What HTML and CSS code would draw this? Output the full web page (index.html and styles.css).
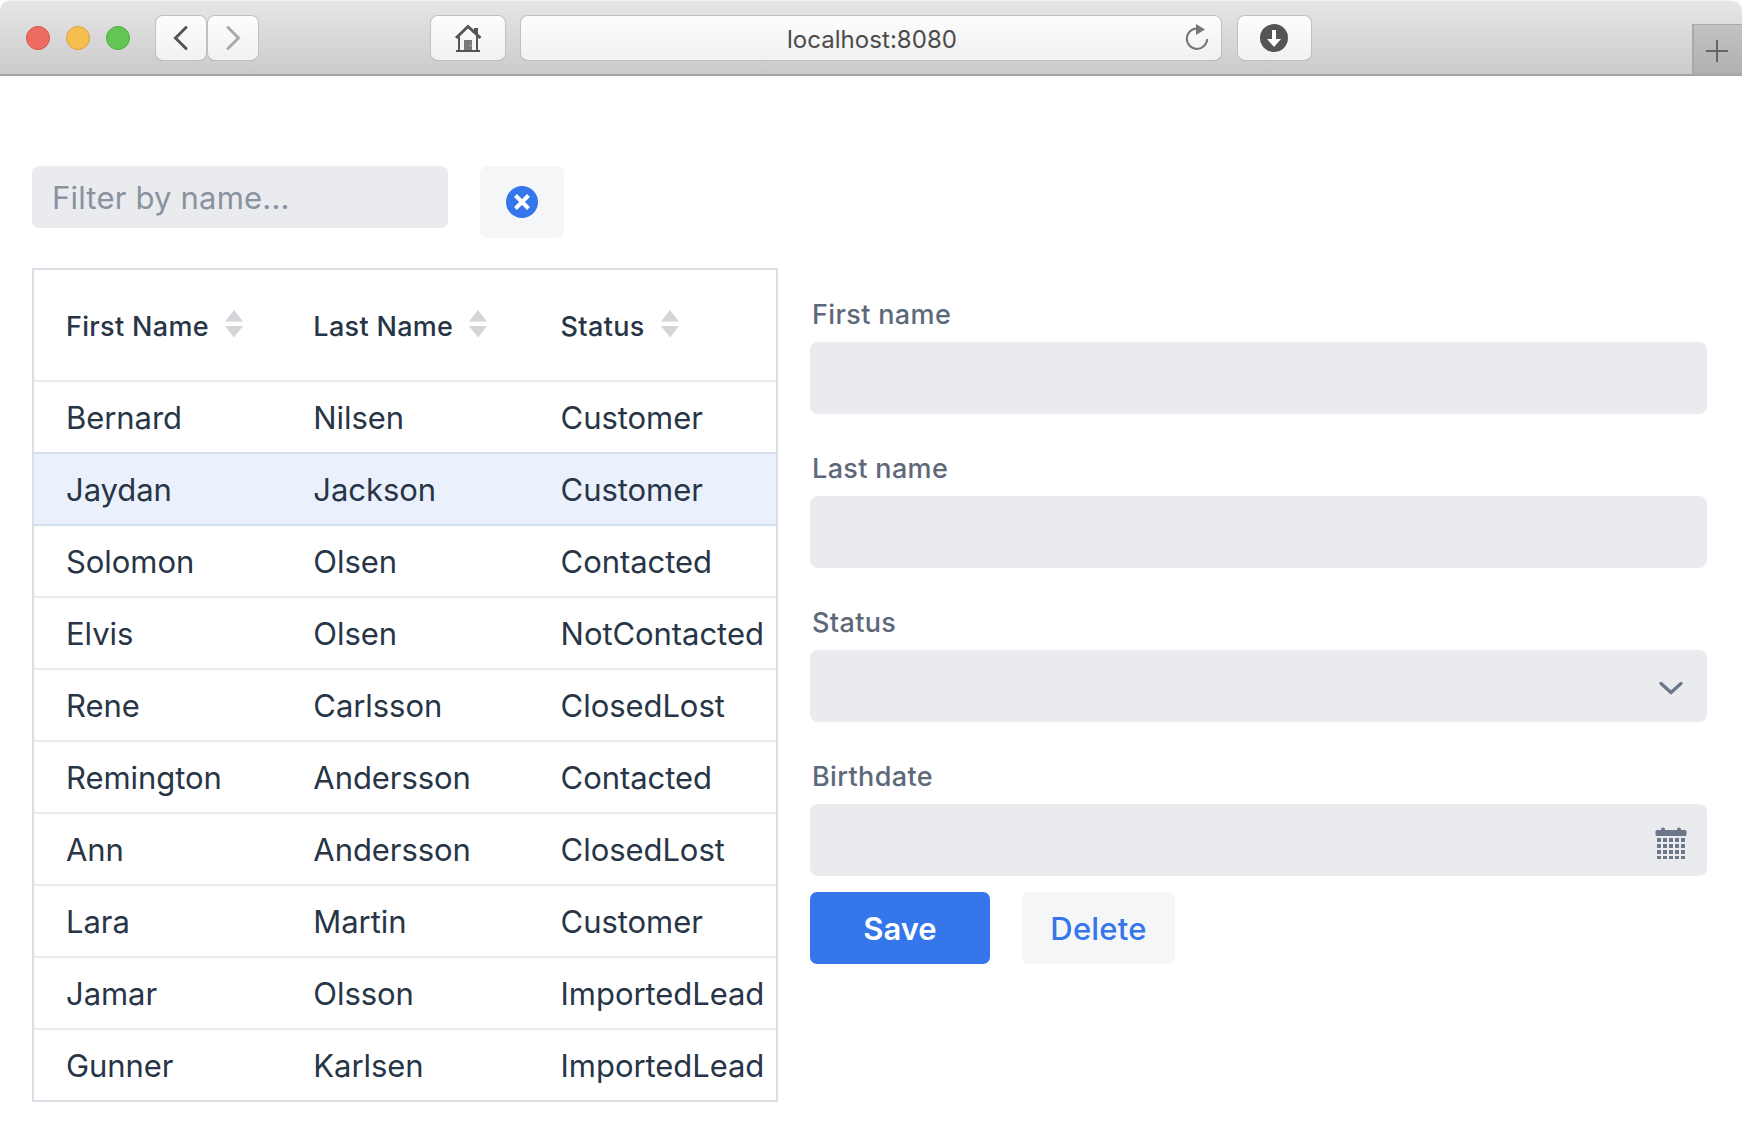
FILE: index.html
```html
<!DOCTYPE html>
<html lang="en">
<head>
<meta charset="utf-8">
<title>localhost:8080</title>
<link rel="stylesheet" href="styles.css">
</head>
<body>
<header class="toolbar">
  <div class="lights"><span class="light red"></span><span class="light yellow"></span><span class="light green"></span></div>
  <div class="nav">
    <div class="chrome-btn"><svg width="50" height="46" viewBox="0 0 50 46"><path d="M30 12.500L19.500 23L30 33.500" fill="none" stroke="#555" stroke-width="3" stroke-linecap="round"/></svg></div>
    <div class="chrome-btn"><svg width="50" height="46" viewBox="0 0 50 46"><path d="M20 12.500L30.500 23L20 33.500" fill="none" stroke="#aaa" stroke-width="3" stroke-linecap="round"/></svg></div>
  </div>
  <div class="chrome-btn home"><svg width="76" height="46" viewBox="0 0 76 46"><path d="M26 23L38 11.500L50.500 23" fill="none" stroke="#555" stroke-width="3"/><path d="M44 13h4v7l-4-4z" fill="#555"/><path d="M29 21V36M47 21V36" stroke="#555" stroke-width="2"/><path d="M26 36H50" stroke="#555" stroke-width="2"/><path d="M34 25h8v10h-8z" fill="#777"/><circle cx="40.500" cy="30.500" r=".6" fill="#fff"/></svg></div>
  <div class="chrome-btn address"><span class="url">localhost:8080</span>
    <svg class="reload" width="30" height="30" viewBox="0 0 30 30"><path d="M14 5.500A10.200 10.200 0 1 0 24.200 16" fill="none" stroke="#777" stroke-width="2"/><path d="M13 1V12L22 6.500z" fill="#777"/></svg></div>
  <div class="chrome-btn download"><svg width="75" height="46" viewBox="0 0 75 46"><circle cx="37" cy="23" r="14" fill="#555"/><path d="M35 15h4v9h5L37 32L30 24h5z" fill="#fff"/></svg></div>
  <div class="new-tab"><svg width="48" height="48" viewBox="0 0 48 48"><path d="M12 26H34M23 15V37" stroke="#666" stroke-width="2"/></svg></div>
</header>
<main class="page">
  <div class="filter-bar">
    <div class="filter">Filter by name...</div>
    <div class="clear"><svg width="32" height="32" viewBox="0 0 32 32"><circle cx="16" cy="16" r="16" fill="#3576eb"/><path d="M9.500 9.500L22.500 22.500M22.500 9.500L9.500 22.500" stroke="#fff" stroke-width="4"/></svg></div>
  </div>
  <div class="content">
    <div class="grid">
      <div class="row head">
        <span>First Name<svg class="sort" width="18" height="28" viewBox="0 0 18 28"><path d="M0 11.500L9 0L18 11.500zM0 16H18L9 27.500z" fill="#d3d5d9"/></svg></span>
        <span>Last Name<svg class="sort" width="18" height="28" viewBox="0 0 18 28"><path d="M0 11.500L9 0L18 11.500zM0 16H18L9 27.500z" fill="#d3d5d9"/></svg></span>
        <span>Status<svg class="sort" width="18" height="28" viewBox="0 0 18 28"><path d="M0 11.500L9 0L18 11.500zM0 16H18L9 27.500z" fill="#d3d5d9"/></svg></span>
      </div>
      <div class="row before-selected"><span>Bernard</span><span>Nilsen</span><span>Customer</span></div>
      <div class="row selected"><span>Jaydan</span><span>Jackson</span><span>Customer</span></div>
      <div class="row"><span>Solomon</span><span>Olsen</span><span>Contacted</span></div>
      <div class="row"><span>Elvis</span><span>Olsen</span><span>NotContacted</span></div>
      <div class="row"><span>Rene</span><span>Carlsson</span><span>ClosedLost</span></div>
      <div class="row"><span>Remington</span><span>Andersson</span><span>Contacted</span></div>
      <div class="row"><span>Ann</span><span>Andersson</span><span>ClosedLost</span></div>
      <div class="row"><span>Lara</span><span>Martin</span><span>Customer</span></div>
      <div class="row"><span>Jamar</span><span>Olsson</span><span>ImportedLead</span></div>
      <div class="row"><span>Gunner</span><span>Karlsen</span><span>ImportedLead</span></div>
    </div>
    <form class="form">
      <div class="label">First name</div><div class="field"></div>
      <div class="label">Last name</div><div class="field"></div>
      <div class="label">Status</div><div class="field"><svg width="36" height="36" viewBox="0 0 36 36"><path d="M8 15.500L18 24.500L28 15.500" fill="none" stroke="#6c7789" stroke-width="3.400" stroke-linecap="round" stroke-linejoin="round"/></svg></div>
      <div class="label">Birthdate</div><div class="field"><svg width="36" height="38" viewBox="0 0 36 38"><rect x="2.500" y="9" width="31" height="6" rx="1.500" fill="#6c7789"/><path d="M8 10V8.500a1.500 1.500 0 0 1 4 0V10zM24 10V8.500a1.500 1.500 0 0 1 4 0V10z" fill="#6c7789"/><path d="M4 19H33M4 25H33M4 31H33M4 37H33" stroke="#6c7789" stroke-width="4" stroke-dasharray="4 2"/></svg></div>
      <div class="actions"><div class="button save">Save</div><div class="button delete">Delete</div></div>
    </form>
  </div>
</main>
</body>
</html>
```
FILE: styles.css
```css
* { box-sizing: border-box; }
body { margin: 0; width: 1742px; height: 1134px; overflow: hidden; background: #fff; font-family: Inter, "Liberation Sans", sans-serif; color: #283547; }
svg { display: block; flex: none; }
.toolbar { display: flex; align-items: flex-start; height: 76px; padding: 14px 0 0 26px; border-top: 1px solid #f5f5f5; border-bottom: 2px solid #a6a6a6; border-radius: 10px 10px 0 0; background: linear-gradient(#e6e6e6, #cbcbcb); }
.lights { display: flex; gap: 16px; padding-top: 11px; }
.light { width: 24px; height: 24px; border-radius: 50%; border: 1px solid; }
.red { background: #ed6b60; border-color: #dc5248; }
.yellow { background: #f5bf4f; border-color: #d9a03c; }
.green { background: #62c655; border-color: #50aa40; }
.nav { display: flex; gap: 2px; margin-left: 26px; }
.chrome-btn { display: flex; align-items: center; justify-content: center; height: 44px; margin-top: 1px; border-radius: 7px; background: linear-gradient(#fdfdfd, #f1f1f1); box-shadow: 0 0 0 1px #c0c0c0, 0 1px 0 #999; }
.nav .chrome-btn { width: 50px; }
.home { width: 74px; margin-left: 173px; }
.address { width: 700px; margin-left: 16px; padding: 0 8px 0 0; }
.url { flex: 1; padding: 2px 0 0 40px; text-align: center; font-size: 24px; letter-spacing: .05px; color: #4b4b4b; }
.download { width: 73px; margin-left: 17px; }
.new-tab { width: 50px; height: 50px; margin: 9px 0 0 auto; border: solid #a9a9a9; border-width: 1px 0 0 2px; background: linear-gradient(#c2c2c2, #b0b0b0); }
.page { padding: 90px 35px 0 32px; }
.filter-bar { display: flex; align-items: flex-start; gap: 32px; }
.filter { width: 416px; height: 62px; padding-left: 20px; border-radius: 7px; background: #e9ebee; color: #8a92a0; font-size: 31px; line-height: 63px; letter-spacing: .2px; }
.clear { display: flex; align-items: center; justify-content: center; width: 84px; height: 72px; border-radius: 7px; background: #f4f6f8; }
.content { display: flex; gap: 32px; margin-top: 30px; }
.grid { width: 746px; height: 834px; border: 2px solid #dadee5; }
.row { display: grid; grid-template-columns: 247.300px 247.300px 1fr; height: 72px; border-bottom: 2px solid #e9ebee; font-size: 31px; line-height: 71px; letter-spacing: -.06px; }
.row:last-child { height: 70px; border: 0; }
.row span { padding-left: 32px; white-space: nowrap; }
.head { height: 112px; font-size: 27px; font-weight: 500; line-height: 113px; letter-spacing: .32px; }
.head span { display: flex; }
.sort { margin: 40px 0 0 16px; }
.before-selected { border-color: #d9e0eb; }
.selected { background: #eaf1fd; border-color: #d5e0ef; background-clip: padding-box; }
.form { flex: 1; padding-top: 28px; }
.label { height: 46px; padding-left: 2px; color: #5d6979; font-size: 27px; font-weight: 500; line-height: 38px; letter-spacing: .36px; }
.field { display: flex; align-items: center; justify-content: flex-end; height: 72px; margin-bottom: 36px; padding-right: 18px; border-radius: 8px; background: #e9ebee; }
.actions { display: flex; gap: 32px; margin-top: -20px; }
.button { height: 72px; border-radius: 7px; font-size: 31px; line-height: 73px; text-align: center; }
.save { width: 180px; background: #3576eb; color: #fff; font-weight: 600; }
.delete { width: 153px; background: #f4f6f8; color: #3576eb; font-weight: 500; letter-spacing: .2px; }
```
